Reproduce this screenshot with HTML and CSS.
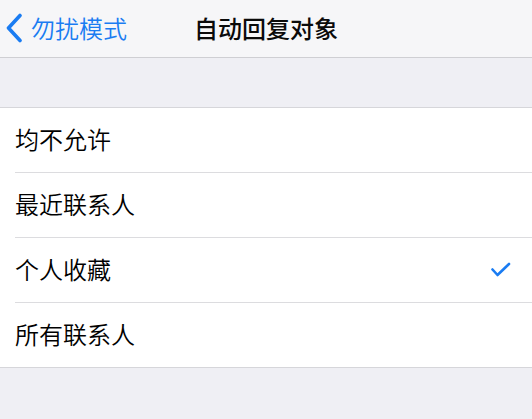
FILE: index.html
```html
<!DOCTYPE html>
<html lang="zh-CN">
<head>
    <meta charset="UTF-8">
    <meta name="viewport" content="width=device-width, initial-scale=1.0">
    <title>自动回复对象</title>
    <link rel="stylesheet" href="styles.css">
</head>
<body>
    <header class="navbar">
        <a class="back" href="#">
            <svg class="chevron" width="20" height="30" viewBox="0 0 20 30">
                <polyline points="16,2.5 4.5,15 16,27.5" fill="none" stroke="#1a7cf2" stroke-width="3.6" stroke-linecap="round" stroke-linejoin="round"/>
            </svg>
            <span>勿扰模式</span>
        </a>
        <h1 class="title">自动回复对象</h1>
        <div></div>
    </header>
    <div class="spacer"></div>
    <ul class="list">
        <li class="row"><span>均不允许</span></li>
        <li class="row"><span>最近联系人</span></li>
        <li class="row">
            <span>个人收藏</span>
            <svg class="check" width="22" height="16" viewBox="0 0 22 16">
                <polyline points="2.5,7.5 7.5,13 19,2" fill="none" stroke="#1a7cf2" stroke-width="2.6" stroke-linecap="round" stroke-linejoin="round"/>
            </svg>
        </li>
        <li class="row"><span>所有联系人</span></li>
    </ul>
</body>
</html>
```

FILE: styles.css
```css
body {
    margin: 0;
    background: #efeff4;
    font-family: "Noto Sans CJK SC", "Noto Sans", sans-serif;
    color: #000;
}
.navbar {
    display: grid;
    grid-template-columns: 1fr auto 1fr;
    align-items: center;
    height: 57px;
    background: #f6f6f8;
    border-bottom: 1px solid #cfcfd3;
}
.back {
    display: flex;
    align-items: center;
    gap: 7px;
    padding-left: 4px;
    color: #1a7cf2;
    text-decoration: none;
    font-size: 24px;
    font-weight: 350;
}
.back span {
    margin-top: -2px;
}
.chevron {
    display: block;
    margin-top: -1px;
}
.title {
    margin: 0;
    font-size: 24px;
    font-weight: 500;
    color: #0a0a0a;
    margin-top: -2px;
}
.spacer {
    height: 49px;
}
.list {
    list-style: none;
    margin: 0;
    padding: 0 0 0 15px;
    background: #fff;
    border-top: 1px solid #d6d6da;
    border-bottom: 1px solid #d6d6da;
}
.row {
    display: flex;
    align-items: center;
    justify-content: space-between;
    height: 64px;
    padding-right: 20px;
    font-size: 24px;
    font-weight: 350;
    border-bottom: 1px solid #dcdcdf;
}
.row span {
    margin-top: -3px;
}
.row:last-child {
    border-bottom: none;
}
.check {
    display: block;
}
```
